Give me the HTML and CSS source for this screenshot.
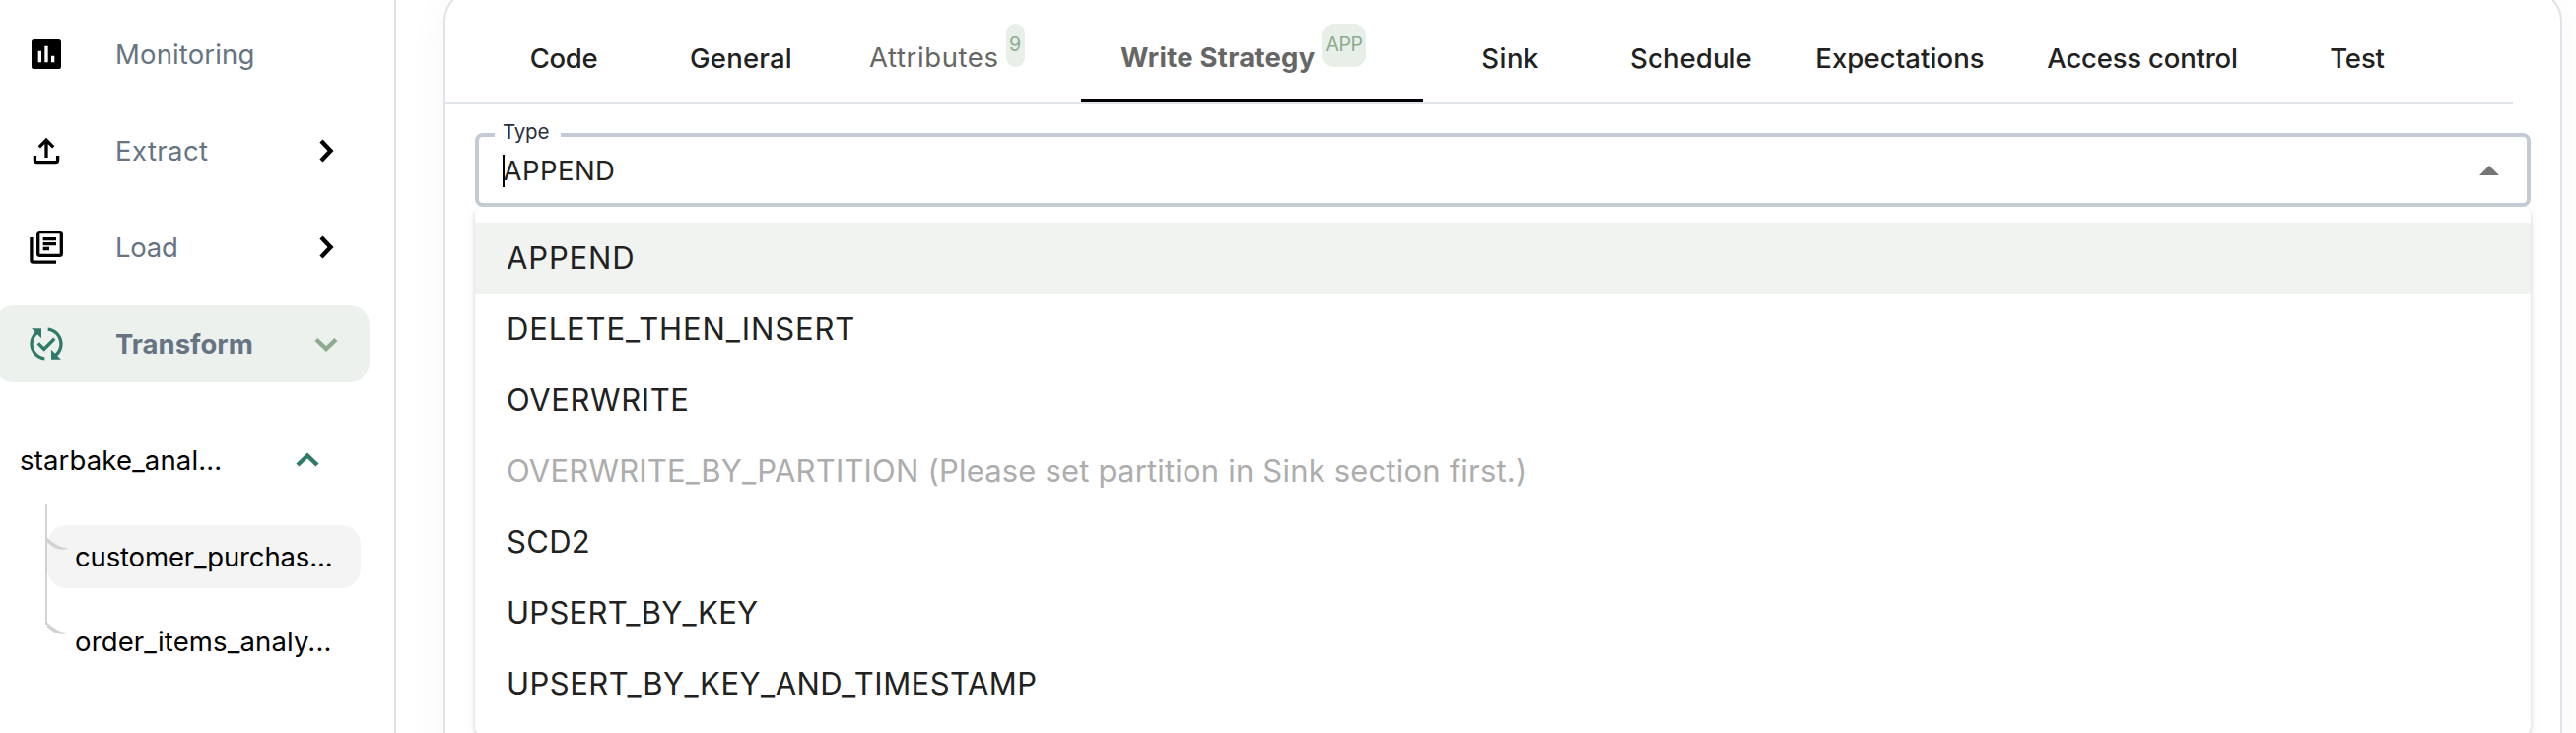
FILE: index.html
```
<!DOCTYPE html>
<html lang="en">
<head>
<meta charset="utf-8">
<title>Transform – Write Strategy</title>
<link rel="stylesheet" href="styles.css">
</head>
<body>
<div class="app">
  <aside class="sidebar">
    <nav class="nav">
      <a class="nav-item">
        <svg class="icon" viewBox="0 0 24 24"><path fill-rule="evenodd" d="M19.6 3H4.4C3.6 3 3 3.6 3 4.4v15.2c0 .8.6 1.4 1.4 1.4h15.2c.8 0 1.4-.6 1.4-1.4V4.4c0-.8-.6-1.4-1.4-1.4zM9 17H7v-7h2v7zm4 0h-2V7h2v10zm4 0h-2v-4h2v4z"/></svg>
        <span class="nav-label t-monitoring">Monitoring</span>
      </a>
      <a class="nav-item">
        <svg class="icon line" viewBox="0 0 40 40"><path d="M20 27V9M12.8 16.4L20 9.2l7.2 7.2M8.4 25v4.6q0 2 2 2h19.2q2 0 2-2V25"/></svg>
        <span class="nav-label t-extract">Extract</span>
        <svg class="chevron" viewBox="0 0 28 28"><path d="M9 4L18.500 14l-9.500 10"/></svg>
      </a>
      <a class="nav-item">
        <svg class="icon line" viewBox="0 0 40 40"><rect x="11.7" y="4.7" width="23.6" height="23.6" rx="1.5"/><path d="M16.7 11.7H30M16.7 16.6H30M16.7 21.5H23M4.900 10v23.5q0 1.6 1.6 1.6H30"/></svg>
        <span class="nav-label t-load">Load</span>
        <svg class="chevron" viewBox="0 0 28 28"><path d="M9 4L18.500 14l-9.500 10"/></svg>
      </a>
      <a class="nav-item active">
        <svg class="icon" viewBox="0 0 24 24"><path d="M17.66 9.53l-7.07 7.07-4.24-4.24 1.41-1.41 2.83 2.83 5.66-5.66 1.41 1.41zM4 12c0-2.33 1.02-4.42 2.62-5.88L9 8.5v-6H3l2.2 2.2C3.24 6.52 2 9.11 2 12c0 5.19 3.95 9.45 9 9.95v-2.02c-3.94-.49-7-3.86-7-7.93zm18 0c0-5.19-3.95-9.45-9-9.95v2.02c3.94.49 7 3.86 7 7.93 0 2.33-1.02 4.42-2.62 5.88L15 15.5v6h6l-2.2-2.2c1.96-1.82 3.2-4.41 3.2-7.3z"/></svg>
        <span class="nav-label t-transform">Transform</span>
        <svg class="chevron" viewBox="0 0 28 28"><path d="M4 9.500L14 19l10-9.500"/></svg>
      </a>
    </nav>
    <div class="tree-head">
      <span class="tree-label t-starbake">starbake_anal...</span>
      <svg class="chevron" viewBox="0 0 28 28"><path d="M4 19L14 9.500l10 9.500"/></svg>
    </div>
    <div class="tree">
      <div class="tree-item selected t-customer"><svg class="branch" viewBox="0 0 24 14"><path d="M0 0Q12 11 22 10Q12 15.5 0 4.500z"/></svg>customer_purchas...</div>
      <div class="tree-item t-order"><svg class="branch" viewBox="0 0 24 14"><path d="M0 0Q12 11 22 10Q12 15.5 0 4.500z"/></svg>order_items_analy...</div>
    </div>
  </aside>
  <main class="card">
    <div class="tabs">
      <div class="tab t-code">Code</div>
      <div class="tab t-general">General</div>
      <div class="tab badged"><span class="t-attributes">Attributes</span><span class="badge">9</span></div>
      <div class="tab badged current"><span class="t-write">Write Strategy</span><span class="badge wide">APP</span></div>
      <div class="tab t-sink">Sink</div>
      <div class="tab t-schedule">Schedule</div>
      <div class="tab t-schedule">Expectations</div>
      <div class="tab t-access">Access control</div>
      <div class="tab t-test">Test</div>
    </div>
    <div class="field">
      <span class="field-label">Type</span>
      <span class="field-value">APPEND</span>
      <svg class="arrow" viewBox="0 0 20 10"><path d="M0 10L10 0l10 10z"/></svg>
    </div>
    <div class="menu">
      <div class="option focused t-append">APPEND</div>
      <div class="option t-delete">DELETE_THEN_INSERT</div>
      <div class="option t-overwrite">OVERWRITE</div>
      <div class="option disabled t-partition">OVERWRITE_BY_PARTITION (Please set partition in Sink section first.)</div>
      <div class="option t-scd">SCD2</div>
      <div class="option t-key">UPSERT_BY_KEY</div>
      <div class="option t-stamp">UPSERT_BY_KEY_AND_TIMESTAMP</div>
    </div>
  </main>
</div>
</body>
</html>
```
FILE: styles.css
```
* { box-sizing: border-box; }
body {
  margin: 0;
  background: #fff;
  color: #212121;
  font: 400 27.5px/1.2 Inter, "Liberation Sans", sans-serif;
}
.app { display: flex; height: 744px; overflow: hidden; }
span, .tab, .tree-item, .option { white-space: nowrap; }

/* Sidebar */
.sidebar { width: 402px; flex: none; border-right: 2px solid #e0e0e0; }
.nav { display: flex; flex-direction: column; gap: 20px; padding-top: 16px; }
.nav-item {
  display: flex;
  align-items: center;
  height: 78px;
  width: 381px;
  margin-left: -6px;
  padding: 0 30px 0 33px;
  border-radius: 20px;
  color: #667482;
}
.icon { width: 40px; height: 40px; flex: none; fill: #000; }
.icon.line { fill: none; stroke: #000; stroke-width: 3.3; }
.nav-label { margin-left: 50px; flex: 1; }
.chevron { width: 28px; height: 28px; flex: none; fill: none; stroke: #000; stroke-width: 4.4; }
.nav-item.active { background: #ecf1ee; font-weight: 700; }
.active .icon { fill: #2f7a68; }
.active .chevron { stroke: #8cab8f; }
.tree-head {
  display: flex;
  align-items: center;
  justify-content: space-between;
  height: 78px;
  margin-top: 40px;
  padding: 0 74px 0 20px;
  color: #000;
}
.tree-head .chevron { stroke: #2f7a68; }
.tree {
  display: flex;
  flex-direction: column;
  gap: 22px;
  margin: 6px 0 0 46px;
  padding-top: 21px;
  color: #000;
  background: linear-gradient(#d2d2d2, #d2d2d2) 0 0 / 2px 122px no-repeat;
}
.tree-item {
  position: relative;
  display: flex;
  align-items: center;
  width: 318px;
  height: 64px;
  margin-left: 2px;
  padding-left: 28px;
  border-radius: 20px;
}
.tree-item.selected { background: #f4f4f4; }
.branch { position: absolute; left: 0; top: 13px; width: 24px; height: 14px; fill: #d2d2d2; }

/* Card and tabs */
.card {
  width: 2150px;
  height: 900px;
  flex: none;
  margin: -12px 0 0 48px;
  border: 2px solid #dfe2e8;
  border-radius: 34px;
  box-shadow: 0 8px 40px rgba(0, 0, 0, .045);
  background: #fff;
}
.tabs {
  display: grid;
  grid-template-columns: 180px 180px 255px 347px 177px 190px 234px 258px 178px;
  width: 2098px;
  height: 116px;
  padding: 24px 0 0 30px;
  border-bottom: 2px solid #e0e4e8;
  font-weight: 500;
}
.tab { display: flex; align-items: center; justify-content: center; }
.badged { justify-content: flex-start; align-items: flex-start; padding: 0 0 0 40px; font-weight: 400; color: #666; }
.badged > span:first-child { padding-top: 28px; }
.current { border-bottom: 4px solid #000; font-weight: 700; }
.badge {
  height: 44px;
  margin: 10px 0 0 7px;
  padding: 0 3.5px;
  border-radius: 10px;
  background: #e8efe8;
  color: #8cab8f;
  font-size: 19.5px;
  font-weight: 400;
  line-height: 43px;
}
.badge.wide { padding: 0 4px; letter-spacing: -.5px; border-radius: 12px; }

/* Select field */
.field {
  position: relative;
  display: flex;
  align-items: center;
  justify-content: space-between;
  width: 2086px;
  height: 75px;
  margin: 29px 0 0 30px;
  padding: 0 28px 0 24px;
  border: 4px solid #c4cbd5;
  border-radius: 8px;
}
.field-label {
  position: absolute;
  left: 16px;
  top: -18px;
  width: 67px;
  padding-left: 8px;
  background: #fff;
  color: #273040;
  font-size: 20.5px;
  line-height: 26px;
  letter-spacing: -.2px;
}
.field-value { border-left: 2px solid #000; line-height: 33px; margin-top: 2px; letter-spacing: .45px; text-indent: -1.5px; }
.arrow { width: 20px; height: 10px; fill: #757575; }

/* Options */
.menu {
  width: 2086px;
  margin-left: 30px;
  padding: 16px 0;
  border-radius: 8px;
  box-shadow: 0 2px 4px rgba(0, 0, 0, .16), 0 4px 16px rgba(0, 0, 0, .05);
  font-size: 31px;
}
.option { display: flex; align-items: center; height: 72px; padding-left: 32px; }
.option.focused { background: #f1f3f1; }
.option.disabled { color: #adadad; }

/* Tracking per label */
.t-monitoring { letter-spacing: .15px; }
.t-extract { letter-spacing: .42px; }
.t-load { letter-spacing: -.27px; }
.t-starbake { letter-spacing: .15px; }
.t-customer { letter-spacing: -.15px; }
.t-order { letter-spacing: .15px; }
.t-code { letter-spacing: -.3px; }
.t-general { letter-spacing: .2px; }
.t-attributes { letter-spacing: .6px; }
.t-write { letter-spacing: .24px; }
.t-sink { letter-spacing: .47px; }
.t-schedule { letter-spacing: .1px; }
.t-access { letter-spacing: -.2px; }
.t-test { letter-spacing: -.1px; }
.t-append { letter-spacing: .86px; }
.t-delete { letter-spacing: .86px; }
.t-overwrite { letter-spacing: .6px; }
.t-partition { letter-spacing: .19px; }
.t-scd { letter-spacing: .3px; }
.t-key { letter-spacing: .28px; }
.t-stamp { letter-spacing: .48px; }
```
